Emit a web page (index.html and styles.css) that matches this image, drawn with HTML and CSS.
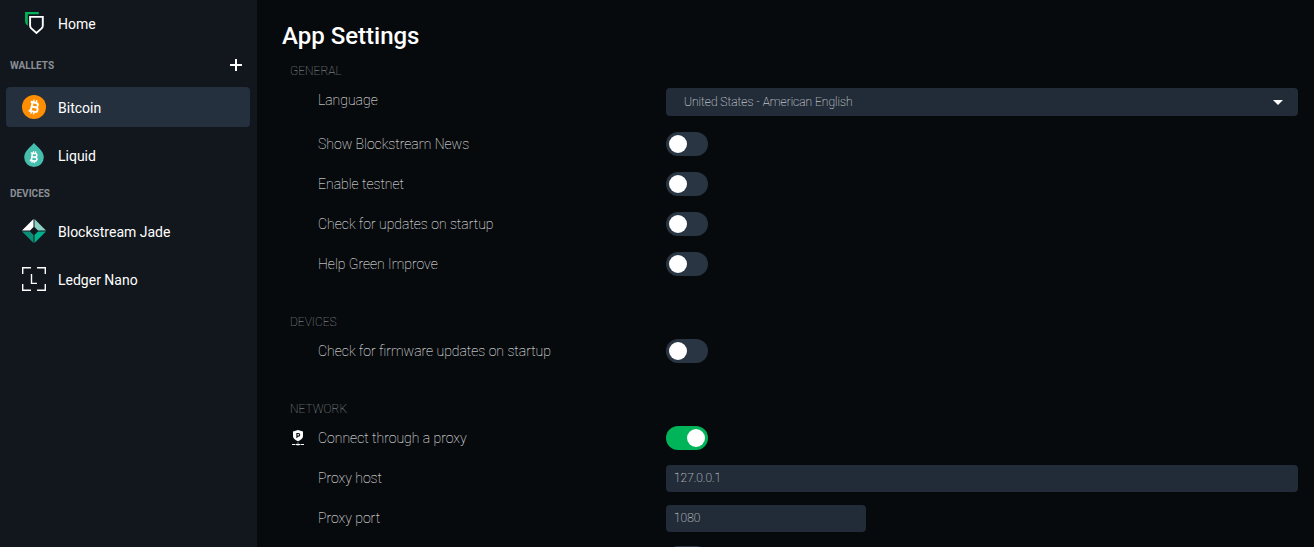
FILE: index.html
```html
<!DOCTYPE html>
<html lang="en">
<head>
<meta charset="utf-8">
<title>App Settings</title>
<link rel="stylesheet" href="styles.css">
</head>
<body>
<nav class="sidebar" aria-label="Main">
  <a class="nav-item" href="#home">
    <svg class="nav-icon" viewBox="0 0 24 24" aria-hidden="true">
      <path d="M3.1 1h13.7v2.3H5.8v11.4C4 13.600 3.100 12 3.100 10z" fill="#00b45a"/>
      <path d="M8.100 5.900h12.700v8.600q0 1.700-1.200 2.900l-5.150 4.600-5.150-4.600q-1.200-1.200-1.200-2.900z" fill="none" stroke="#fff" stroke-width="1.900"/>
    </svg>
    <span class="nav-text">Home</span>
  </a>

  <div class="nav-header nav-header-tall">
    <h2 class="nav-heading">Wallets</h2>
    <button class="add-button" type="button" aria-label="Add wallet">
      <svg class="add-icon" viewBox="0 0 12 12" aria-hidden="true"><path d="M6 0v12M0 6h12" stroke="#fff" stroke-width="2"/></svg>
    </button>
  </div>
  <div class="nav-list">
    <a class="nav-item active" href="#bitcoin" aria-current="page">
      <svg class="nav-icon" viewBox="0 0 24 24" aria-hidden="true">
        <circle cx="12" cy="12" r="12" fill="#ff8e00"/>
        <g transform="rotate(13 12 12)" fill="none" stroke="#fff">
          <path d="M7.600 7.600h5.600a2.200 2.200 0 0 1 0 4.400H9.800M13 12h.9a2.300 2.300 0 0 1 0 4.600H7.600M9.600 7.600v9" stroke-width="1.900"/>
          <path d="M10.500 4.800v2.400M13.200 4.800v2.400M10.500 16.800v2.400M13.200 16.800v2.400" stroke-width="1.400"/>
        </g>
      </svg>
      <span class="nav-text">Bitcoin</span>
    </a>
    <a class="nav-item" href="#liquid">
      <svg class="nav-icon" viewBox="0 0 24 24" aria-hidden="true">
        <path d="M12 0c2.600 3.200 9.800 7.800 9.800 14.200a9.800 9.800 0 0 1-19.600 0C2.200 7.800 9.400 3.200 12 0z" fill="#46beae"/>
        <g transform="rotate(8 12 14)" fill="none" stroke="#fff">
          <path d="M8.300 10.400h4.500a1.800 1.800 0 0 1 0 3.600H10M12.800 14h.5a1.900 1.900 0 0 1 0 3.900h-5M9.900 10.400v7.500" stroke-width="1.600"/>
          <path d="M10.800 8.200v2M13 8.200v2M10.800 18v2M13 18v2" stroke-width="1.200"/>
        </g>
      </svg>
      <span class="nav-text">Liquid</span>
    </a>
  </div>

  <div class="nav-header">
    <h2 class="nav-heading">Devices</h2>
  </div>
  <div class="nav-list">
    <a class="nav-item" href="#jade">
      <svg class="nav-icon" viewBox="0 0 24 24" aria-hidden="true">
        <path d="M11.500 0v8L8 11.500H0z" fill="#fff"/>
        <path d="M12.500 0v8l3.500 3.500h8z" fill="#8ad0c3"/>
        <path d="M0 12.500h8l3.500 3.500v8z" fill="#0c8f78"/>
        <path d="M24 12.500h-8L12.500 16v8z" fill="#00b08d"/>
      </svg>
      <span class="nav-text">Blockstream Jade</span>
    </a>
    <a class="nav-item" href="#ledger">
      <svg class="nav-icon" viewBox="0 0 24 24" aria-hidden="true">
        <path d="M.7 7V.7H9M15 .7h8.300V7M.7 17v6.300H9M15 23.300h8.300V17" fill="none" stroke="#fff" stroke-width="1.400"/>
        <path d="M9.500 7v9.400h5.500" fill="none" stroke="#fff" stroke-width="1.400"/>
      </svg>
      <span class="nav-text">Ledger Nano</span>
    </a>
  </div>
</nav>

<main class="content">
  <h1 class="title">App Settings</h1>

  <section class="group">
    <h2 class="group-title">General</h2>
    <div class="row row-select">
      <label class="label" for="language">Language</label>
      <div class="select-wrap">
        <select class="field select" id="language"><option>United States - American English</option></select>
        <svg class="caret" viewBox="0 0 10 5" aria-hidden="true"><path d="M0 0h10L5 5z" fill="#fff"/></svg>
      </div>
    </div>
    <div class="row">
      <label class="label" for="news">Show Blockstream News</label>
      <input class="toggle" type="checkbox" role="switch" id="news">
    </div>
    <div class="row">
      <label class="label" for="testnet">Enable testnet</label>
      <input class="toggle" type="checkbox" role="switch" id="testnet">
    </div>
    <div class="row">
      <label class="label" for="updates">Check for updates on startup</label>
      <input class="toggle" type="checkbox" role="switch" id="updates">
    </div>
    <div class="row">
      <label class="label" for="improve">Help Green Improve</label>
      <input class="toggle" type="checkbox" role="switch" id="improve">
    </div>
  </section>

  <section class="group">
    <h2 class="group-title">Devices</h2>
    <div class="row">
      <label class="label" for="firmware">Check for firmware updates on startup</label>
      <input class="toggle" type="checkbox" role="switch" id="firmware">
    </div>
  </section>

  <section class="group">
    <h2 class="group-title">Network</h2>
    <div class="row">
      <svg class="row-icon" viewBox="0 0 16 16" aria-hidden="true">
        <path d="M8 0l5 1.500v4.500c0 2.400-2 3.900-5 5.200-3-1.300-5-2.800-5-5.200V1.500z" fill="#fff"/>
        <path d="M6.900 8V3.500h1.500a1.300 1.300 0 0 1 0 2.600H6.900" fill="none" stroke="#070a0d" stroke-width="1.100"/>
        <path d="M2 14.500h3M5.500 14.500h5M11 14.500h3" fill="none" stroke="#fff" stroke-width="1.200"/>
        <path d="M6.500 13.400a1.600 1.300 0 0 1 3 0zM6.500 15.400a1.600 1 0 0 0 3 0z" fill="#999"/>
      </svg>
      <label class="label" for="proxy">Connect through a proxy</label>
      <input class="toggle" type="checkbox" role="switch" id="proxy" checked>
    </div>
    <div class="row">
      <label class="label" for="host">Proxy host</label>
      <input class="field text" type="text" id="host" value="127.0.0.1">
    </div>
    <div class="row">
      <label class="label" for="port">Proxy port</label>
      <input class="field text text-short" type="text" id="port" value="1080">
    </div>
    <div class="row">
      <input class="toggle" type="checkbox" role="switch" id="tor" aria-label="Connect with Tor">
    </div>
  </section>
</main>
</body>
</html>
```

FILE: styles.css
```css
* { box-sizing: border-box; }

body {
  margin: 0;
  height: 100vh;
  display: flex;
  overflow: hidden;
  background: #070a0d;
  color: #fff;
  font-family: Roboto, sans-serif;
  font-size: 14px;
  line-height: 20px;
}

h1, h2 { margin: 0; }

.sidebar {
  flex: 0 0 257px;
  padding: 3px 7px 0 6px;
  background: #12171d;
}

.nav-list {
  display: flex;
  flex-direction: column;
  gap: 8px;
}

.nav-item {
  display: flex;
  align-items: center;
  gap: 12px;
  height: 40px;
  padding: 0 16px;
  border-radius: 4px;
  color: #fff;
  text-decoration: none;
}

.nav-item.active { background: #24303d; }

.nav-icon { width: 24px; height: 24px; }

.nav-text { padding-top: 1px; }

.nav-header {
  display: flex;
  align-items: center;
  justify-content: space-between;
  height: 36px;
  padding: 0 4px;
}

.nav-header-tall { height: 44px; }

.nav-heading {
  padding-top: 2px;
  color: #8a8f96;
  font-size: 10px;
  font-weight: 700;
  text-transform: uppercase;
}

.add-button {
  display: flex;
  padding: 4px;
  border: 0;
  background: none;
}

.add-icon { width: 12px; height: 12px; }

.content {
  flex: 1;
  padding: 20px 16px 0 25px;
  overflow: hidden auto;
  scrollbar-width: none;
}

.title {
  font-size: 24px;
  font-weight: 500;
  line-height: 32px;
  margin-bottom: 8px;
}

.group { margin: 0 0 27px 8px; }

.group-title {
  padding-top: 2px;
  color: #a0a4a8;
  font-size: 12px;
  font-weight: 100;
  line-height: 18px;
  text-transform: uppercase;
}

.row {
  display: grid;
  grid-template-columns: 28px 348px 1fr;
  align-items: center;
  height: 40px;
}

.row-select { height: 44px; }
.row-select .label { padding-bottom: 4px; }

.row-icon { width: 16px; height: 16px; }

.label {
  grid-column: 2;
  font-weight: 100;
}

.field {
  width: 100%;
  border: 0;
  border-radius: 4px;
  background: #222c39;
  color: #fff;
  font-family: inherit;
  font-size: 12px;
  font-weight: 100;
}

.select-wrap {
  position: relative;
  grid-column: 3;
  display: flex;
}

.select {
  height: 28px;
  padding: 0 36px 0 18px;
  appearance: none;
}

.caret {
  position: absolute;
  top: 12px;
  right: 15px;
  width: 10px;
  height: 5px;
  pointer-events: none;
}

.text {
  grid-column: 3;
  height: 27px;
  padding: 0 8px;
}

.text-short { width: 200px; }

.toggle {
  grid-column: 3;
  width: 42px;
  height: 24px;
  margin: 0;
  padding: 3px;
  border-radius: 12px;
  background: #2a3544;
  appearance: none;
}

.toggle::before {
  content: "";
  display: block;
  width: 18px;
  height: 18px;
  border-radius: 50%;
  background: #fff;
}

.toggle:checked { background: #00b45a; }
.toggle:checked::before { margin-left: auto; }
```
